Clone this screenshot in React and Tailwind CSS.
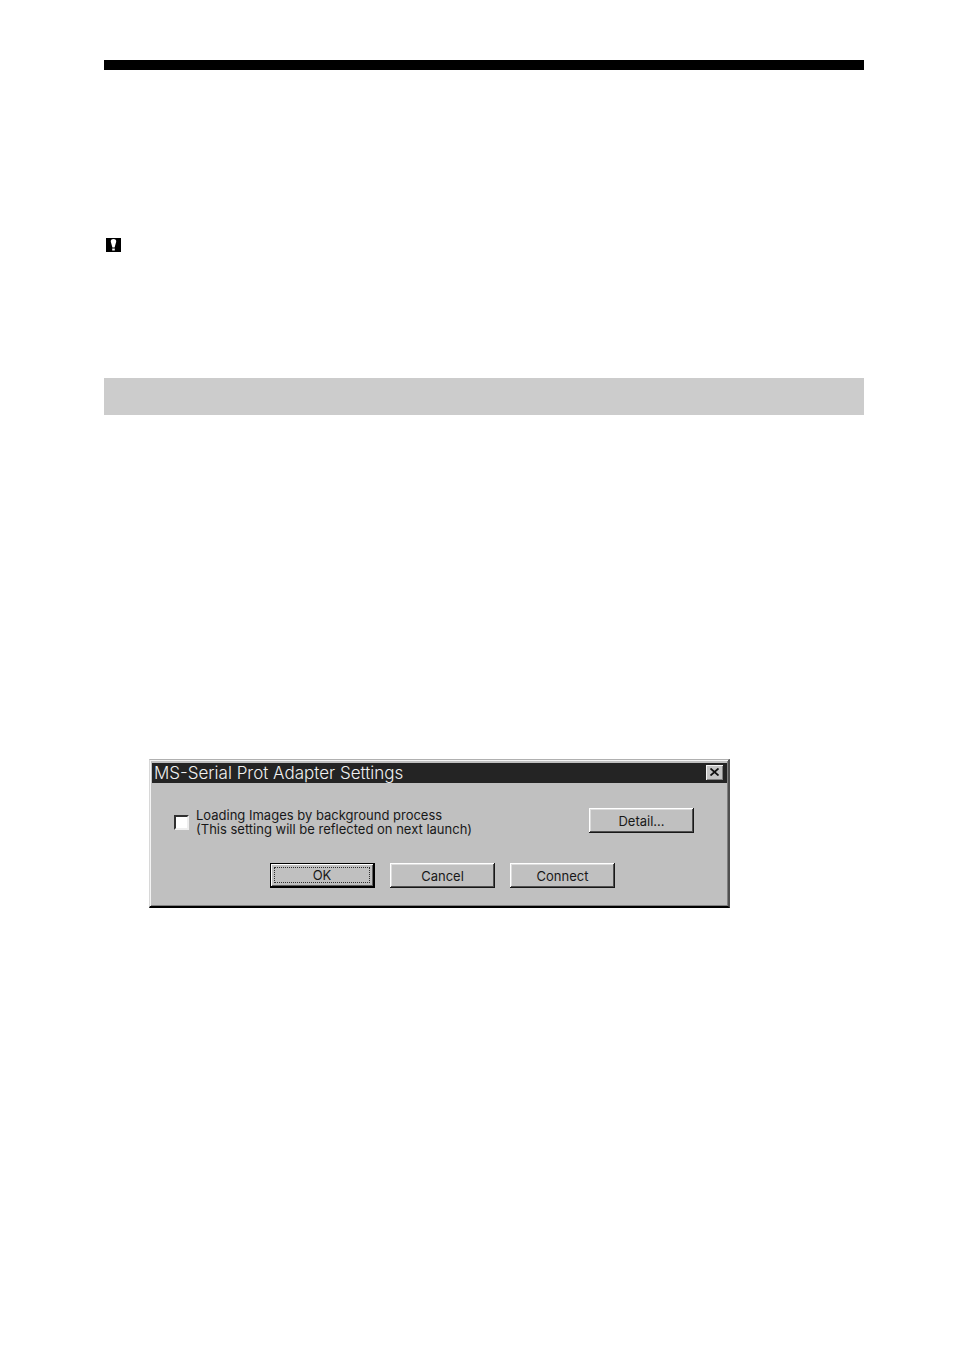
const raised =
  'bg-[#c0c0c0] shadow-[inset_-1px_-1px_#181818,inset_1px_1px_#fff,inset_-2px_-2px_#505050,inset_2px_2px_#dcdcdc]';

function PushButton({ children }) {
  return (
    <button type="button" className={`h-[25px] w-[105px] text-center ${raised}`}>
      {children}
    </button>
  );
}

function DefaultButton({ children }) {
  return (
    <button
      type="button"
      className="h-[25px] w-[105px] border border-r-2 border-b-2 border-black bg-[#c0c0c0] p-[3px] shadow-[inset_1px_1px_#fff,inset_-1px_-1px_#606060]"
    >
      <span className="flex h-full items-center justify-center border border-dotted border-[#303030]">
        {children}
      </span>
    </button>
  );
}

function SettingsDialog() {
  return (
    <section
      aria-labelledby="dialog-title"
      className="w-full max-w-[581px] border-t border-r-2 border-b-2 border-l border-t-[#b0b0b0] border-r-[#505050] border-b-black border-l-[#d8d8d8] bg-[#c0c0c0] pt-[3px] pr-px pb-[18px] pl-[2px] font-['Inter','Liberation_Sans',sans-serif] text-[13px] leading-[14px] text-[#181818] shadow-[inset_1px_1px_#f4f4f4,inset_-1px_-1px_#808080]"
    >
      <header className="flex h-5 items-center justify-between bg-[#242424] pr-1 pl-[2px]">
        <h1
          id="dialog-title"
          className="text-[17px] leading-5 font-light text-[#f0f0f0]"
        >
          MS-Serial Prot Adapter Settings
        </h1>
        <button
          type="button"
          aria-label="Close"
          className="mb-[2px] flex h-[15px] w-[17px] items-center justify-center bg-[#c4c4c4] shadow-[inset_1px_1px_#f4f4f4,inset_-1px_-1px_#808080]"
        >
          <svg viewBox="0 0 9 8" className="h-2 w-[9px]" aria-hidden="true">
            <path d="M.5.5l8 7M8.5.5l-8 7" stroke="#111" strokeWidth="1.8" fill="none" />
          </svg>
        </button>
      </header>

      <div className="flex items-start justify-between pt-[25px] pr-[33px] pl-[22px]">
        <div className="flex items-center gap-[7px]">
          <input
            id="background-loading"
            type="checkbox"
            className="h-[15px] w-[15px] shrink-0 appearance-none border-2 border-t-[#303030] border-r-[#eeeeee] border-b-[#eeeeee] border-l-[#303030] bg-white"
          />
          <label htmlFor="background-loading">
            Loading Images by background process
            <br />
            (This setting will be reflected on next launch)
          </label>
        </div>
        <PushButton>Detail...</PushButton>
      </div>

      <div className="flex justify-center gap-[15px] pt-[27px] pl-[6px]">
        <DefaultButton>OK</DefaultButton>
        <PushButton>Cancel</PushButton>
        <PushButton>Connect</PushButton>
      </div>
    </section>
  );
}

export default function App() {
  return (
    <main className="min-h-screen bg-white pt-[60px] pr-[90px] pb-16 pl-[104px]">
      <div className="h-[10px] bg-black" />
      <svg
        viewBox="0 0 15 14"
        className="mt-[168px] ml-[2px] h-[14px] w-[15px]"
        role="img"
        aria-label="Note"
      >
        <path d="M0 0h15v14H0z" fill="#000" />
        <path
          d="M7.5 1c2 0 3 1.100 2.700 2.800L8.600 9.400H6.400L4.800 3.800C4.500 2.100 5.500 1 7.500 1zM6.200 10.600h2.600v2H6.200z"
          fill="#fff"
        />
      </svg>
      <div className="mt-[126px] h-[37px] bg-[#cccccc]" />
      <div className="mt-[344px] pl-[45px]">
        <SettingsDialog />
      </div>
    </main>
  );
}
